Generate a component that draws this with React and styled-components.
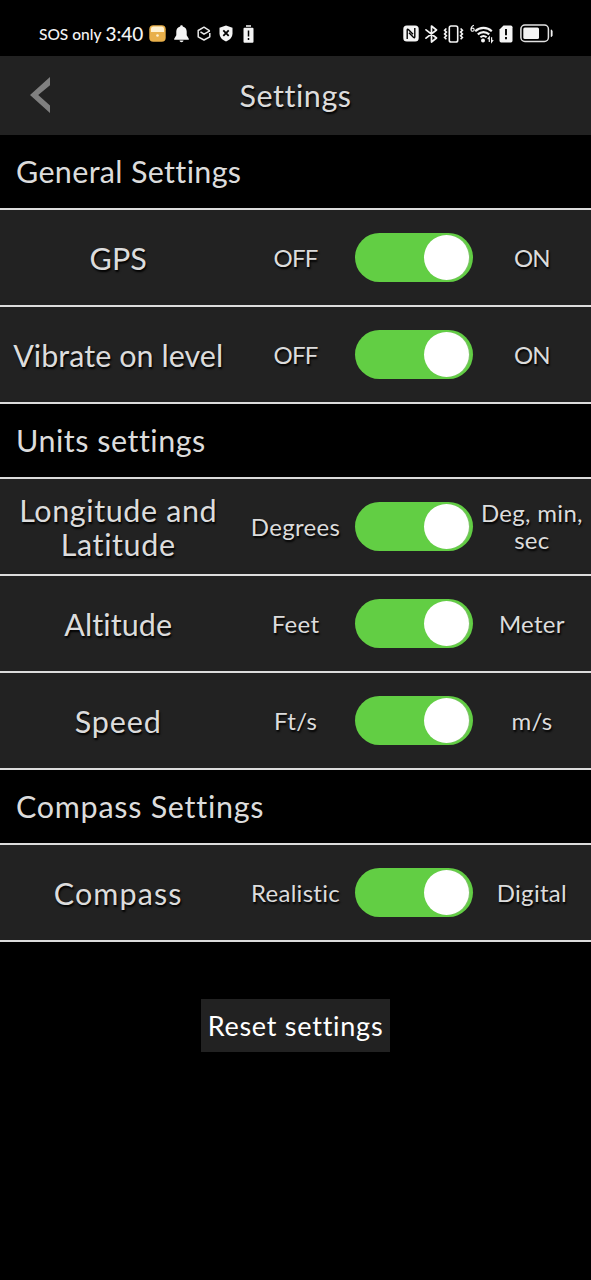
import React, { useState } from "react";
import styled, { createGlobalStyle } from "styled-components";

const sections = [
  {
    title: "General Settings",
    spacing: 0.33,
    rows: [
      { id: "gps", label: "GPS", spacing: 0, off: "OFF", on: "ON" },
      {
        id: "vibrate",
        label: "Vibrate on level",
        spacing: 0.05,
        off: "OFF",
        on: "ON",
      },
    ],
  },
  {
    title: "Units settings",
    spacing: 0.5,
    rows: [
      {
        id: "position",
        label: "Longitude and Latitude",
        spacing: 0.6,
        off: "Degrees",
        on: "Deg, min, sec",
      },
      {
        id: "altitude",
        label: "Altitude",
        spacing: 0.1,
        off: "Feet",
        on: "Meter",
      },
      { id: "speed", label: "Speed", spacing: 0.9, off: "Ft/s", on: "m/s" },
    ],
  },
  {
    title: "Compass Settings",
    spacing: 0.72,
    rows: [
      {
        id: "compass",
        label: "Compass",
        spacing: 1.1,
        off: "Realistic",
        on: "Digital",
      },
    ],
  },
];

const defaultValues = {
  gps: true,
  vibrate: true,
  position: true,
  altitude: true,
  speed: true,
  compass: true,
};

const StatusBar = () => (
  <StatusBox>
    <div className="left">
      <span className="carrier">SOS only</span>
      <span className="time">3:40</span>
      <svg width="17" height="17" viewBox="0 0 17 17">
        <rect x="0.3" y="0.3" width="16.4" height="16.4" rx="4" fill="#e9b04a" />
        <path d="M2 5.5V4a2.5 2.5 0 0 1 2.5-2.5h8A2.5 2.5 0 0 1 15 4v3H2z" fill="#fff1cf" />
        <circle cx="8.5" cy="10.5" r="1.3" fill="#fff1cf" />
      </svg>
      <svg width="15" height="18" viewBox="0 0 15 18" fill="#f4f4f4">
        <path d="M7.5.3c.8 0 1.3.5 1.3 1.2 2.4.6 3.9 2.5 3.9 5v3.8l2.1 3.5v1H.2v-1l2.1-3.5V6.5c0-2.5 1.5-4.4 3.9-5 0-.7.5-1.2 1.3-1.2z" />
        <path d="M5.5 15.6h4c-.2 1.1-1 1.7-2 1.7s-1.8-.6-2-1.7z" />
      </svg>
      <svg width="14" height="15" viewBox="0 0 14 15" fill="none" stroke="#e8e8e8" strokeWidth="1.5" strokeLinejoin="round">
        <path d="M12.8 4.8L7 1.2 1.2 4.500v6.300L7 14l5.800-3.200V7" />
        <path d="M3.5 5.8L7 8.2l5.800-3.400" />
      </svg>
      <svg width="14" height="17" viewBox="0 0 14 17">
        <path d="M7 .5l6.500 2.300v5.400c0 3.800-2.500 6.500-6.500 8.300C3 14.700.5 12 .5 8.200V2.800z" fill="#f4f4f4" />
        <path d="M4.300 5.400l5.400 5.400M9.700 5.400l-5.400 5.400" stroke="#000" strokeWidth="1.8" />
      </svg>
      <svg className="battery-alert" width="11" height="18" viewBox="0 0 11 18">
        <path d="M3 .3h5v1.500H3zM1.500 2.700h8q1 0 1 1v13q0 1-1 1h-8q-1 0-1-1v-13q0-1 1-1z" fill="#f4f4f4" />
        <path d="M5.500 5.500v6M5.500 13v2" stroke="#000" strokeWidth="1.5" />
      </svg>
    </div>
    <div className="right">
      <svg width="16" height="17" viewBox="0 0 16 17">
        <rect x="0.3" y="0.5" width="15.4" height="16" rx="3.5" fill="#f4f4f4" />
        <path d="M4.2 14V5.200q0-1.800 1.400-.5L10 9.200M11.800 3v8.800q0 1.800-1.400.5L6 7.800" fill="none" stroke="#000" strokeWidth="1.4" />
      </svg>
      <svg width="13" height="18" viewBox="0 0 13 18" fill="none" stroke="#f4f4f4" strokeWidth="1.7" strokeLinejoin="round" strokeLinecap="round">
        <path d="M1 4.800l10.500 8.200-5 4V1l5 4L1 13.200" />
      </svg>
      <svg width="21" height="18" viewBox="0 0 21 18" fill="none" stroke="#f4f4f4" strokeWidth="1.6">
        <rect x="6.3" y="1" width="8.4" height="16" rx="1.8" />
        <path d="M3.400 3.500L1.600 5.300l1.800 1.800-1.800 1.800 1.800 1.800-1.800 1.800 1.800 1.800M17.600 3.500l1.800 1.800-1.800 1.800 1.800 1.800-1.800 1.800 1.800 1.800-1.800 1.800" />
      </svg>
      <svg width="24" height="20" viewBox="0 0 24 20" fill="none" stroke="#f4f4f4" strokeWidth="2.1">
        <path d="M3.900 1.200C2 1.800 1 3.200 1 5.500" strokeWidth="1.1" />
        <circle cx="2.6" cy="5.7" r="1.6" strokeWidth="1.1" />
        <path d="M5.200 7.200c4.600-4.400 12-4.400 16.600 0M7.800 10.400c3.300-3 8.100-3 11.400 0M10.400 13.300c1.900-1.600 4.300-1.600 6.200 0" />
        <circle cx="13" cy="16.5" r="2" fill="#f4f4f4" stroke="none" />
        <path d="M19.300 18v-4.800l-1.600 2M21.600 13.200V18l1.600-2" strokeWidth="1.2" />
      </svg>
      <svg width="14" height="18" viewBox="0 0 14 18">
        <path d="M4.500.5h7.300q1.700 0 1.700 1.700v13.600q0 1.700-1.700 1.700H2.200Q.5 17.500.5 15.800V4.500z" fill="#f4f4f4" />
        <path d="M7 4v6.200M7 12v2.200" stroke="#000" strokeWidth="1.9" />
      </svg>
      <svg className="battery" width="34" height="19" viewBox="0 0 34 19">
        <rect x="0.9" y="1" width="27.5" height="16.5" rx="4" fill="none" stroke="#e2e2e2" strokeWidth="1.5" />
        <rect x="3.3" y="3.5" width="15.7" height="11.5" rx="1.5" fill="#f4f4f4" />
        <path d="M31 5.800q1.300.3 1.300 1.500v4q0 1.200-1.300 1.500z" fill="#f4f4f4" stroke="#f4f4f4" strokeWidth="0.5" />
      </svg>
    </div>
  </StatusBox>
);

const SettingRow = ({ row, checked, onToggle }) => (
  <Row>
    <RowLabel $spacing={row.spacing}>{row.label}</RowLabel>
    <Option $caps={row.off === "OFF"}>{row.off}</Option>
    <Toggle
      type="button"
      role="switch"
      aria-checked={checked}
      $checked={checked}
      onClick={onToggle}
    >
      <Knob />
    </Toggle>
    <Option $caps={row.on === "ON"}>{row.on}</Option>
  </Row>
);

const App = () => {
  const [values, setValues] = useState(defaultValues);

  const onToggle = (id) => {
    setValues({ ...values, [id]: !values[id] });
  };

  return (
    <Page>
      <GlobalStyle />
      <StatusBar />
      <Header>
        <BackButton type="button">
          <svg width="20" height="36" viewBox="0 0 20 36">
            <path d="M20 0v8.200L8.200 18 20 28.500V36L0 18z" fill="#808080" />
          </svg>
        </BackButton>
        <Title>Settings</Title>
      </Header>
      {sections.map((section) => (
        <section key={section.title}>
          <SectionTitle $spacing={section.spacing}>{section.title}</SectionTitle>
          <RowList>
            {section.rows.map((row) => (
              <SettingRow
                key={row.id}
                row={row}
                checked={values[row.id]}
                onToggle={() => onToggle(row.id)}
              />
            ))}
          </RowList>
        </section>
      ))}
      <ResetButton type="button" onClick={() => setValues(defaultValues)}>
        Reset settings
      </ResetButton>
    </Page>
  );
};

const GlobalStyle = createGlobalStyle`
  body {
    margin: 0;
    background: #000;
  }
  * {
    box-sizing: border-box;
  }
  button {
    border: 0;
    padding: 0;
    font-family: inherit;
  }
`;

const Page = styled.div`
  display: flex;
  flex-direction: column;
  width: 100%;
  min-height: 1280px;
  background: #000;
  color: #dcdcdc;
  font-family: Lato, "Noto Sans", sans-serif;
  font-variant-ligatures: none;
`;

const StatusBox = styled.div`
  display: flex;
  justify-content: space-between;
  height: 56px;
  padding: 10px 37px 0 39px;
  color: #f4f4f4;

  .left,
  .right {
    display: flex;
    align-items: center;
    height: 47px;
  }
  .left {
    gap: 8px;
  }
  .right {
    gap: 5.5px;
  }
  .carrier {
    font-size: 15.5px;
    font-weight: 500;
    margin-right: -4px;
  }
  .time {
    font-size: 19px;
    font-weight: 500;
    margin-right: -2px;
  }
  .battery-alert {
    margin-left: 2px;
  }
  .battery {
    margin-left: 1.5px;
  }
`;

const Header = styled.header`
  display: grid;
  grid-template-columns: 80px 1fr 80px;
  align-items: center;
  height: 79px;
  padding-bottom: 2px;
  background: #222;
`;

const BackButton = styled.button`
  display: flex;
  justify-content: center;
  background: none;
`;

const Title = styled.h1`
  margin: 0;
  font-size: 30.5px;
  font-weight: 400;
  text-align: center;
  letter-spacing: 0.55px;
  text-shadow: 1px 2px 2px #000;
`;

const SectionTitle = styled.h2`
  display: flex;
  align-items: center;
  height: 73px;
  margin: 0;
  padding: 0 0 1px 16px;
  font-size: 30.5px;
  font-weight: 400;
  letter-spacing: ${(props) => props.$spacing}px;
`;

const RowList = styled.div`
  border-top: 2px solid #dcdcdc;
`;

const Row = styled.div`
  display: grid;
  grid-template-columns: 2fr 1fr 1fr 1fr;
  align-items: center;
  height: 97px;
  background: #222;
  border-bottom: 2px solid #dcdcdc;
`;

const RowLabel = styled.span`
  padding: 0 4px;
  font-size: 30.5px;
  line-height: 34px;
  text-align: center;
  letter-spacing: ${(props) => props.$spacing}px;
  text-shadow: 1px 2px 2px #000;
`;

const Option = styled.span`
  padding-bottom: 1px;
  font-size: 24px;
  line-height: 27px;
  text-align: center;
  letter-spacing: ${(props) => (props.$caps ? "-0.8px" : "0.3px")};
  text-shadow: 1px 2px 2px #000;
`;

const Toggle = styled.button`
  display: flex;
  justify-content: ${(props) => (props.$checked ? "flex-end" : "flex-start")};
  align-items: center;
  height: 49px;
  padding: 0 3.5px;
  border-radius: 25px;
  background: ${(props) => (props.$checked ? "#62ce44" : "#777")};
`;

const Knob = styled.span`
  width: 45px;
  height: 45px;
  border-radius: 50%;
  background: #fff;
  box-shadow: 1px 0 1px #84c070;
`;

const ResetButton = styled.button`
  align-self: center;
  width: 189px;
  height: 53px;
  margin-top: 57px;
  padding-bottom: 1px;
  background: #222;
  color: #fff;
  font-size: 27px;
  letter-spacing: 0.75px;
`;

export default App;
